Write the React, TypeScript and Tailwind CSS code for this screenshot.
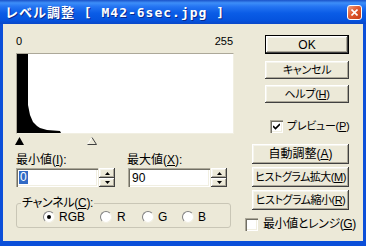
import React from 'react'

const raised =
  'bg-[#ECE9D8] shadow-[inset_-1px_-1px_#404040,inset_1px_1px_#ffffff,inset_-2px_-2px_#ACA899,inset_2px_2px_#F5F4EC]'
const sunken =
  'bg-white shadow-[inset_1px_1px_#ACA899,inset_2px_2px_#716F64,inset_-1px_-1px_#ffffff,inset_-2px_-2px_#F1EFE2]'

const Btn: React.FC<{ className?: string; children: React.ReactNode }> = ({ className = '', children }) => (
  <div className={`flex items-center justify-center leading-none whitespace-nowrap ${raised} ${className}`}>
    {children}
  </div>
)

const Arrow: React.FC<{ up?: boolean }> = ({ up }) => (
  <svg width="5" height="3" viewBox="0 0 5 3" className="block">
    <path d={up ? 'M2.5 0L5 3H0Z' : 'M0 0H5L2.5 3Z'} fill="#000" />
  </svg>
)

const Spin: React.FC = () => (
  <div className="flex flex-col w-[16px] h-[19px]">
    <div className={`h-[10px] flex items-center justify-center ${raised}`}>
      <Arrow up />
    </div>
    <div className={`h-[9px] flex items-center justify-center ${raised}`}>
      <Arrow />
    </div>
  </div>
)

const Radio: React.FC<{ checked?: boolean }> = ({ checked }) => (
  <div className="w-[12px] h-[12px] rounded-full bg-white border border-t-[#808080] border-l-[#808080] border-r-[#F1EFE2] border-b-[#F1EFE2] flex items-center justify-center">
    {checked && <div className="w-[4px] h-[4px] rounded-full bg-black" />}
  </div>
)

const Check: React.FC<{ checked?: boolean }> = ({ checked }) => (
  <div className={`w-[13px] h-[13px] shrink-0 flex items-center justify-center ${sunken}`}>
    {checked && (
      <svg width="7" height="7" viewBox="0 0 7 7" className="block">
        <path d="M0 3L2.5 5.5L7 1" stroke="#000" strokeWidth="1.6" fill="none" />
      </svg>
    )}
  </div>
)

export default function App() {
  return (
    <div className="w-[366px] h-[246px] flex flex-col bg-[#0B4FD9] overflow-hidden text-black [font-family:'Liberation_Sans','Noto_Sans_CJK_JP',sans-serif] [font-feature-settings:'palt']">
      {/* title bar */}
      <div className="h-[24px] shrink-0 flex items-center pl-[5px] pr-[4px] bg-[linear-gradient(to_bottom,#1A52C8_0%,#3D8EF8_12%,#2474F2_28%,#0A5CE6_55%,#0553DE_85%,#0A48C8_100%)]">
        <span className="text-white font-bold text-[13px] leading-none tracking-[1px] whitespace-pre [font-family:'DejaVu_Sans_Mono','Noto_Sans_CJK_JP',monospace] [font-feature-settings:normal] [text-shadow:1px_1px_0_#0A2A8C]">
          レベル調整 [ M42-6sec.jpg ]
        </span>
        <div className="ml-auto w-[15px] h-[15px] rounded-[3px] border border-white bg-[linear-gradient(135deg,#F0A080_0%,#E05A30_45%,#C83C14_100%)] flex items-center justify-center">
          <svg width="7" height="7" viewBox="0 0 7 7" className="block">
            <path d="M0.5 0.5L6.5 6.5M6.5 0.5L0.5 6.5" stroke="#fff" strokeWidth="1.6" />
          </svg>
        </div>
      </div>

      {/* body */}
      <div className="flex-1 mx-[3px] mb-[5px] bg-[#ECE9D8] flex">
        {/* left column */}
        <div className="w-[242px] shrink-0 pl-[13px] pt-[11px] flex flex-col">
          <div className="w-[217px] h-[13px] flex justify-between text-[11px] leading-[13px]">
            <span>0</span>
            <span>255</span>
          </div>
          <div className="mt-[5px] w-[218px] h-[81px] bg-white border border-t-[#ACA899] border-l-[#ACA899] border-r-[#F1EFE2] border-b-[#F1EFE2]">
            <svg width="216" height="79" viewBox="0 0 216 79" className="block">
              <path d="M0 0H11V51L13 61L16 68L20 72L23 74L30 76L43 77L44 79H0Z" fill="#000" />
            </svg>
          </div>
          <div className="relative w-[218px] h-[11px]">
            <svg width="9" height="8" viewBox="0 0 9 8" className="absolute left-[-1px] top-[3px]">
              <path d="M4.5 0L9 8H0Z" fill="#000" />
            </svg>
            <svg width="10" height="8" viewBox="0 0 10 8" className="absolute left-[71px] top-[3px]">
              <path d="M5 0.5L0.5 7.5" stroke="#fff" strokeWidth="1" fill="none" />
              <path d="M5 0.5L9.5 7.5H0.5" stroke="#404040" strokeWidth="1" fill="none" />
            </svg>
          </div>
          <div className="mt-[8px] flex h-[14px] text-[12px] leading-[14px]">
            <span className="w-[111px]">
              最小値(<u>I</u>):
            </span>
            <span>
              最大値(<u>X</u>):
            </span>
          </div>
          <div className="mt-[1px] flex items-start">
            <div className={`w-[82px] h-[19px] flex items-center pl-[3px] ${sunken}`}>
              <span className="bg-[#316AC5] text-white text-[12px] leading-[13px] px-[1px]">0</span>
            </div>
            <div className="ml-[1px]">
              <Spin />
            </div>
            <div className={`ml-[13px] w-[82px] h-[19px] flex items-center pl-[4px] text-[12px] ${sunken}`}>90</div>
            <div className="ml-[1px]">
              <Spin />
            </div>
          </div>
          <div className="mt-[16px] relative w-[215px] h-[25px] border border-[#C9C6B6] rounded-[3px]">
            <span className="absolute left-[4px] -top-[8px] px-[1px] bg-[#ECE9D8] text-[12px] leading-[14px] tracking-[-0.3px]">
              チャンネル(<u>C</u>):
            </span>
            <div className="h-full pt-[2px] pl-[26px] flex items-center text-[12px]">
              <div className="w-[57px] flex items-center gap-[4px]">
                <Radio checked />
                <span>RGB</span>
              </div>
              <div className="w-[42px] flex items-center gap-[5px]">
                <Radio />
                <span>R</span>
              </div>
              <div className="w-[40px] flex items-center gap-[4px]">
                <Radio />
                <span>G</span>
              </div>
              <div className="flex items-center gap-[4px]">
                <Radio />
                <span>B</span>
              </div>
            </div>
          </div>
        </div>

        {/* right column */}
        <div className="w-[118px] shrink-0 min-w-0 pr-[14px] pt-[11px] flex flex-col items-end">
          <div className="w-[84px] h-[19px] border border-black">
            <Btn className="w-full h-full text-[12px]">OK</Btn>
          </div>
          <Btn className="mt-[7px] w-[84px] h-[18px] text-[11px] tracking-[-0.3px]">キャンセル</Btn>
          <Btn className="mt-[6px] w-[84px] h-[18px] text-[11px] tracking-[-0.3px]">
            ヘルプ(<u>H</u>)
          </Btn>
          <div className="mt-[17px] self-start pl-[25px] flex items-center gap-[4px] text-[11px] leading-[13px] tracking-[-0.3px] whitespace-nowrap">
            <Check checked />
            <span>
              プレビュー(<u>P</u>)
            </span>
          </div>
          <Btn className="mt-[11px] w-[97px] h-[20px] text-[12px]">
            自動調整(<u>A</u>)
          </Btn>
          <Btn className="mt-[3px] w-[97px] h-[20px] text-[11px] tracking-[-0.5px]">
            ヒストグラム拡大(<u>M</u>)
          </Btn>
          <Btn className="mt-[3px] w-[97px] h-[20px] text-[11px] tracking-[-0.5px]">
            ヒストグラム縮小(<u>R</u>)
          </Btn>
          <div className="mt-[8px] self-start flex items-center gap-[5px] text-[12px] leading-[13px] tracking-[-0.4px] whitespace-nowrap">
            <Check />
            <span>
              最小値とレンジ(<u>G</u>)
            </span>
          </div>
        </div>
      </div>
    </div>
  )
}
